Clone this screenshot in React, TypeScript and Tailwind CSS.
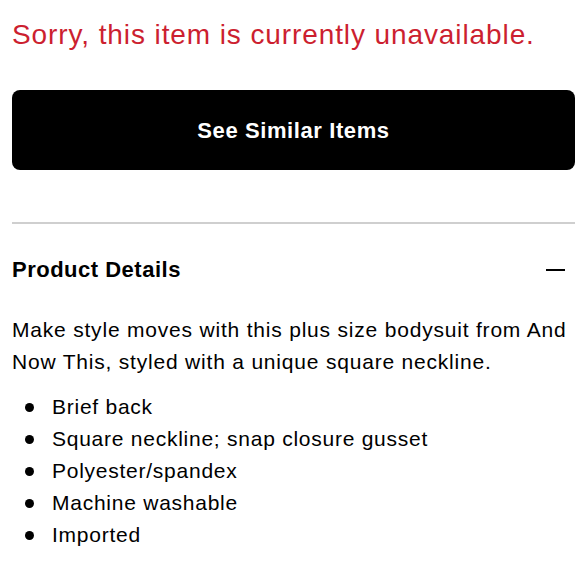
import React from 'react';

const bullets = [
  'Brief back',
  'Square neckline; snap closure gusset',
  'Polyester/spandex',
  'Machine washable',
  'Imported',
];

export default function App() {
  return (
    <div className="w-[580px] h-[580px] bg-white pl-3 pr-[5px] font-['Liberation_Sans',Arial,sans-serif] text-black overflow-hidden">
      {/* Notice */}
      <h1 className="pt-[17px] text-[28px] leading-[36px] tracking-[0.9px] text-[#cc1f30] whitespace-nowrap">
        Sorry, this item is currently unavailable.
      </h1>

      <button className="mt-[37px] w-full h-[80px] rounded-lg bg-black text-white text-[22px] tracking-[0.6px] font-bold">
        See Similar Items
      </button>

      <div className="mt-[52px] h-[2px] bg-[#cfcfcf]" />

      {/* Product details */}
      <div className="mt-[32px] flex items-center justify-between">
        <h2 className="text-[22px] leading-[28px] tracking-[0.5px] font-bold">Product Details</h2>
        <span className="mr-[10px] w-[19px] h-[2px] bg-black" />
      </div>

      <p className="mt-[30px] text-[21px] leading-[32px] tracking-[0.8px]">
        Make style moves with this plus size bodysuit from And Now This, styled with a unique square neckline.
      </p>

      <ul className="mt-[13px]">
        {bullets.map((b) => (
          <li key={b} className="flex items-center h-[32px] text-[21px] tracking-[0.75px]">
            <span className="ml-[13px] w-[9px] h-[9px] rounded-full bg-black" />
            <span className="ml-[18px]">{b}</span>
          </li>
        ))}
      </ul>
    </div>
  );
}
